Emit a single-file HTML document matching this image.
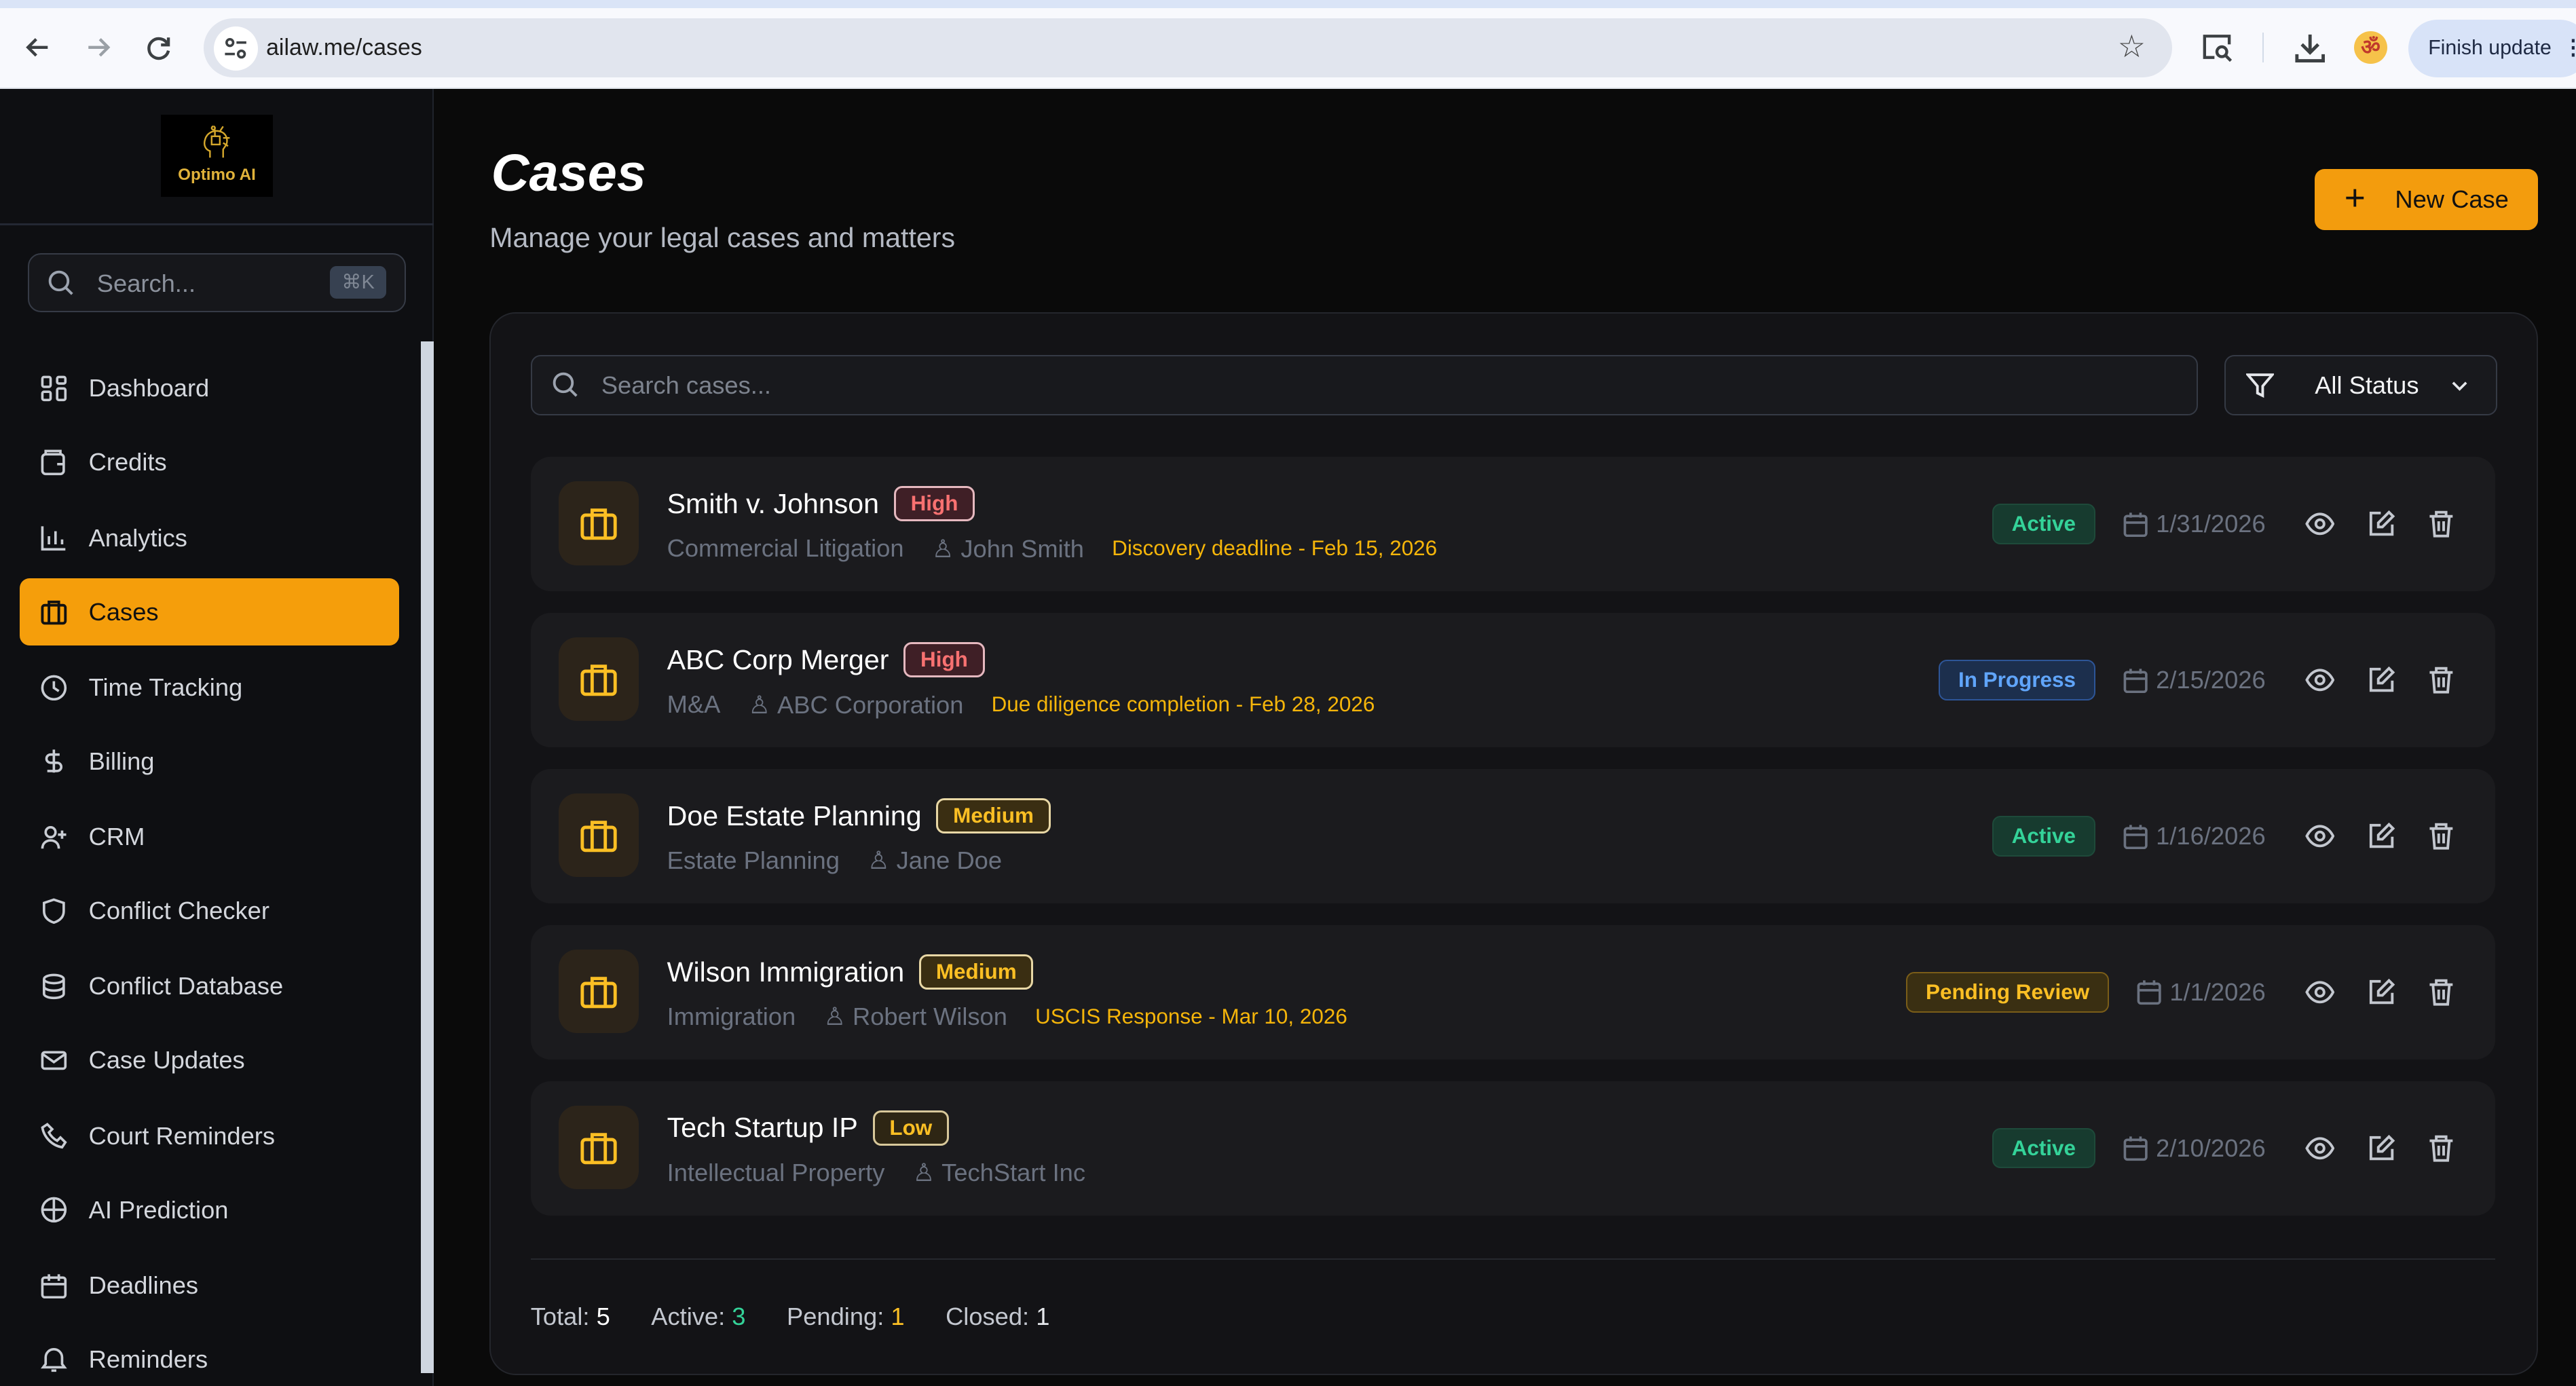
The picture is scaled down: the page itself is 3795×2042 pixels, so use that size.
<!DOCTYPE html>
<html><head><meta charset="utf-8">
<style>
*{box-sizing:border-box;margin:0;padding:0}
html,body{width:3795px;height:2042px;overflow:hidden;background:#0a0a0a}
#z{zoom:2.4203;width:1568px;height:844px;position:relative;font-family:"Liberation Sans",sans-serif;overflow:hidden}
.abs{position:absolute}
svg{display:block}
.chrome{left:0;top:0;width:1568px;height:54px;background:#f8f9fd;border-bottom:1px solid #dde1e8}
.side{left:0;top:54px;width:264px;height:790px;background:#0e0f12;border-right:1px solid #1f232b}
.nav{position:absolute;left:12px;width:231px;height:41px;display:flex;align-items:center;padding-left:13px;color:#d4d7dd;font-size:15px}
.nav svg{margin-right:13px}
.nav.act{background:#f59e0b;border-radius:6px;color:#111}
.row{position:absolute;left:323px;width:1196px;height:82px;background:#1b1b1e;border-radius:12px}
.ib{position:absolute;left:17px;top:15px;width:49px;height:51px;background:#2c241a;border-radius:11px;display:flex;align-items:center;justify-content:center}
.tt{position:absolute;left:83px;top:18px;font-size:17px;color:#fff;display:flex;align-items:center;white-space:nowrap}
.pr{margin-left:9px;font-size:13px;padding:2px 9px;border-radius:5px;border:1.5px solid;font-weight:bold}
.hi{color:#f87171;background:#3f1f26;border-color:#e5b8bf}
.me{color:#fbbf24;background:#3a2e12;border-color:#e8d7a5}
.lo{color:#fbbf24;background:#2e2614;border-color:#d8c89a}
.sub{position:absolute;left:83px;top:47px;font-size:15px;color:#6b7280;display:flex;align-items:center;white-space:nowrap}
.sub .dl{color:#f5b50a;font-size:13px;margin-left:17px}
.rt{position:absolute;right:25px;top:0;height:82px;display:flex;align-items:center;white-space:nowrap}
.st{font-size:13px;font-weight:bold;padding:4px 11px;border-radius:5px;border:1px solid}
.ac{color:#34d399;background:#173b2f;border-color:#1e4a3a}
.ip{color:#60a5fa;background:#1c2f4d;border-color:#2d5597}
.pe{color:#fbbf24;background:#3a2f12;border-color:#7a5d18}
.dt{display:flex;align-items:center;color:#6b7280;font-size:15px;margin-left:17px}
.dt svg{margin-right:5px}
.ic{margin-left:20px}
</style></head><body><div id="z">
<div class="abs" style="left:0;top:0;width:1568px;height:5px;background:#dae4f7"></div>
<div class="abs chrome" style="top:5px;height:49px"></div>
<svg class="abs" style="left:14px;top:20px" width="18" height="18" viewBox="0 0 18 18" fill="none" stroke="#3c4043" stroke-width="1.8"><path d="M15 9H3M8 4L3 9l5 5"/></svg>
<svg class="abs" style="left:51px;top:20px" width="18" height="18" viewBox="0 0 18 18" fill="none" stroke="#9aa0a6" stroke-width="1.8"><path d="M3 9h12M10 4l5 5-5 5"/></svg>
<svg class="abs" style="left:88px;top:20px" width="18" height="18" viewBox="0 0 18 18" fill="none" stroke="#3c4043" stroke-width="1.8"><path d="M14 7A6 6 0 1 0 14.5 11"/><path d="M14.5 3v4.5H10"/></svg>
<div class="abs" style="left:124px;top:11px;width:1198px;height:36px;background:#e1e5ee;border-radius:18px"></div>
<div class="abs" style="left:130px;top:16px;width:27px;height:27px;background:#fff;border-radius:50%"></div>
<svg class="abs" style="left:136px;top:22px" width="15" height="15" viewBox="0 0 15 15" fill="none" stroke="#3c4043" stroke-width="1.5"><circle cx="4" cy="4" r="2"/><path d="M8 4h6M1 11h6"/><circle cx="11" cy="11" r="2"/></svg>
<div class="abs" style="left:162px;top:21px;font-size:14px;color:#1f1f1f">ailaw.me/cases</div>
<div class="abs" style="left:1289px;top:17px;font-size:19px;color:#444">☆</div>
<svg class="abs" style="left:1340px;top:19px" width="20" height="20" viewBox="0 0 20 20" fill="none" stroke="#3c4043" stroke-width="1.8"><path d="M8 16H2V3h15v5"/><circle cx="12.5" cy="12.5" r="3"/><path d="M15 15l3 3"/></svg>
<div class="abs" style="left:1377px;top:20px;width:1px;height:18px;background:#d3dbe8"></div>
<svg class="abs" style="left:1396px;top:19px" width="20" height="20" viewBox="0 0 20 20" fill="none" stroke="#3c4043" stroke-width="2"><path d="M10 2v11M5 8l5 5 5-5M2 14v4h16v-4"/></svg>
<div class="abs" style="left:1433px;top:19px;width:20px;height:20px;border-radius:50%;background:#f6c24a;color:#c0392b;font-size:13px;text-align:center;line-height:20px;font-weight:bold">ॐ</div>
<div class="abs" style="left:1466px;top:12px;width:110px;height:35px;background:#d8e3f8;border-radius:18px;font-size:12.5px;color:#1f2a44;padding:10px 0 0 12px;white-space:nowrap">Finish update &nbsp;<b>⋮</b></div>

<div class="abs side"></div>
<div class="abs" style="left:98px;top:70px;width:68px;height:50px;background:#000;text-align:center">
<svg style="margin:4px auto 0" width="24" height="24" viewBox="0 0 24 24" fill="none" stroke="#d4a72c" stroke-width="1"><path d="M8 22v-4c-3-1-4-4-3-7 1-4 5-6 9-5 4 1 5 5 4 8l-2 3v5"/><rect x="9" y="9" width="5" height="5"/><path d="M14 6l2-3M16 10h4M16 13l3 2M11 9V5M10 3a1 1 0 1 0 .1 0"/></svg>
<div style="color:#e0b23a;font-size:10px;font-weight:bold;margin-top:3px">Optimo AI</div></div>
<div class="abs" style="left:0;top:136px;width:264px;height:1px;background:#232833"></div>
<div class="abs" style="left:17px;top:154px;width:230px;height:36px;border:1px solid #363b46;border-radius:8px;background:#16171b"></div>
<svg class="abs" style="left:29px;top:164px" width="16" height="16" viewBox="0 0 16 16" fill="none" stroke="#9ca3af" stroke-width="1.6"><circle cx="7" cy="7" r="5.5"/><path d="M11 11l4 4"/></svg>
<div class="abs" style="left:59px;top:164px;font-size:15px;color:#8b919c">Search...</div>
<div class="abs" style="left:201px;top:162px;width:34px;height:20px;background:#374151;border-radius:4px;font-size:12px;color:#7f8794;text-align:center;line-height:20px">⌘K</div>
<div class="abs" style="left:256px;top:208px;width:8px;height:628px;background:#cfd6e0"></div>

<div class="nav" style="top:216px"><svg width="16" height="16" viewBox="0 0 16 16" fill="none" stroke="#c8ccd3" stroke-width="1.5"><rect x="1" y="1" width="5" height="6" rx="1"/><rect x="10" y="1" width="5" height="4" rx="1"/><rect x="10" y="8" width="5" height="7" rx="1"/><rect x="1" y="10" width="5" height="5" rx="1"/></svg>Dashboard</div>
<div class="nav" style="top:261px"><svg width="16" height="16" viewBox="0 0 16 16" fill="none" stroke="#c8ccd3" stroke-width="1.5"><rect x="1" y="3" width="13" height="12" rx="2"/><path d="M3 3V1h9v2M10 9h4"/></svg>Credits</div>
<div class="nav" style="top:307px"><svg width="16" height="16" viewBox="0 0 16 16" fill="none" stroke="#c8ccd3" stroke-width="1.5"><path d="M1 1v14h14M5 12V7M9 12V4M13 12V9"/></svg>Analytics</div>
<div class="nav act" style="top:352px"><svg width="16" height="16" viewBox="0 0 16 16" fill="none" stroke="#111" stroke-width="1.6"><rect x="1" y="4" width="14" height="11" rx="1.5"/><path d="M5 4V2h6v2M5 4v11M11 4v11"/></svg>Cases</div>
<div class="nav" style="top:398px"><svg width="16" height="16" viewBox="0 0 16 16" fill="none" stroke="#c8ccd3" stroke-width="1.5"><circle cx="8" cy="8" r="7"/><path d="M8 4v4l3 2"/></svg>Time Tracking</div>
<div class="nav" style="top:443px"><svg width="16" height="16" viewBox="0 0 16 16" fill="none" stroke="#c8ccd3" stroke-width="1.5"><path d="M8 1v14M11.5 4H6a2.5 2.5 0 0 0 0 5h4a2.5 2.5 0 0 1 0 5H4"/></svg>Billing</div>
<div class="nav" style="top:489px"><svg width="16" height="16" viewBox="0 0 16 16" fill="none" stroke="#c8ccd3" stroke-width="1.5"><circle cx="6" cy="5" r="3"/><path d="M1 15c0-3 2-5 5-5s5 2 5 5M13 4v5M10.5 6.5h5"/></svg>CRM</div>
<div class="nav" style="top:534px"><svg width="16" height="16" viewBox="0 0 16 16" fill="none" stroke="#c8ccd3" stroke-width="1.5"><path d="M8 1l6 2v5c0 4-3 6-6 7-3-1-6-3-6-7V3z"/></svg>Conflict Checker</div>
<div class="nav" style="top:580px"><svg width="16" height="16" viewBox="0 0 16 16" fill="none" stroke="#c8ccd3" stroke-width="1.5"><ellipse cx="8" cy="3.5" rx="6" ry="2.5"/><path d="M2 3.5v9c0 1.4 2.7 2.5 6 2.5s6-1.1 6-2.5v-9M2 8c0 1.4 2.7 2.5 6 2.5s6-1.1 6-2.5"/></svg>Conflict Database</div>
<div class="nav" style="top:625px"><svg width="16" height="16" viewBox="0 0 16 16" fill="none" stroke="#c8ccd3" stroke-width="1.5"><rect x="1" y="3" width="14" height="10" rx="1.5"/><path d="M1 4l7 5 7-5"/></svg>Case Updates</div>
<div class="nav" style="top:671px"><svg width="16" height="16" viewBox="0 0 16 16" fill="none" stroke="#c8ccd3" stroke-width="1.5"><path d="M4 1l3 3-2 2c1 2 3 4 5 5l2-2 3 3-2 3C7 14 2 9 1 3z"/></svg>Court Reminders</div>
<div class="nav" style="top:716px"><svg width="16" height="16" viewBox="0 0 16 16" fill="none" stroke="#c8ccd3" stroke-width="1.5"><circle cx="8" cy="8" r="7"/><path d="M8 1v14M1 8h14"/></svg>AI Prediction</div>
<div class="nav" style="top:762px"><svg width="16" height="16" viewBox="0 0 16 16" fill="none" stroke="#c8ccd3" stroke-width="1.5"><rect x="1" y="3" width="14" height="12" rx="1.5"/><path d="M1 7h14M5 1v4M11 1v4"/></svg>Deadlines</div>
<div class="nav" style="top:807px"><svg width="16" height="16" viewBox="0 0 16 16" fill="none" stroke="#c8ccd3" stroke-width="1.5"><path d="M3 11V7a5 5 0 0 1 10 0v4l1.5 2h-13zM6.5 15h3"/></svg>Reminders</div>

<div class="abs" style="left:299px;top:87px;font-size:32px;font-weight:bold;font-style:italic;color:#fff">Cases</div>
<div class="abs" style="left:298px;top:135px;font-size:17px;color:#b5bac4">Manage your legal cases and matters</div>
<div class="abs" style="left:1409px;top:103px;width:136px;height:37px;background:#f39c0d;border-radius:6px;display:flex;align-items:center;padding-left:18px;font-size:15px;color:#111"><span style="font-size:22px;font-weight:300;margin-right:18px;margin-top:-2px">+</span>New Case</div>

<div class="abs" style="left:298px;top:190px;width:1247px;height:647px;background:#131316;border:1px solid #24262c;border-radius:16px"></div>
<div class="abs" style="left:323px;top:216px;width:1015px;height:37px;border:1px solid #353a45;border-radius:6px;background:#18191d"></div>
<svg class="abs" style="left:336px;top:226px" width="16" height="16" viewBox="0 0 16 16" fill="none" stroke="#9ca3af" stroke-width="1.6"><circle cx="7" cy="7" r="5.5"/><path d="M11 11l4 4"/></svg>
<div class="abs" style="left:366px;top:226px;font-size:15px;color:#7d838e">Search cases...</div>
<div class="abs" style="left:1354px;top:216px;width:166px;height:37px;border:1px solid #353a45;border-radius:6px;background:#18191d"></div>
<svg class="abs" style="left:1367px;top:226px" width="17" height="17" viewBox="0 0 16 16" fill="none" stroke="#e5e7eb" stroke-width="1.5"><path d="M1 2h14l-5.5 6.5V14l-3-1.5v-4z"/></svg>
<div class="abs" style="left:1409px;top:226px;font-size:15px;color:#f3f4f6">All Status</div>
<svg class="abs" style="left:1491px;top:229px" width="12" height="12" viewBox="0 0 12 12" fill="none" stroke="#e5e7eb" stroke-width="1.5"><path d="M2 4l4 4 4-4"/></svg>

<!-- rows -->
<div class="row" style="top:278px"><div class="ib"><svg width="24" height="24" viewBox="0 0 24 24" fill="none" stroke="#fbbf24" stroke-width="2"><rect x="2" y="7" width="20" height="14" rx="2"/><path d="M8 7V4h8v3M8 7v14M16 7v14"/></svg></div>
<div class="tt">Smith v. Johnson<span class="pr hi">High</span></div>
<div class="sub">Commercial Litigation<span style="margin-left:17px">♙&nbsp;John Smith</span><span class="dl">Discovery deadline - Feb 15, 2026</span></div>
<div class="rt"><span class="st ac">Active</span><span class="dt"><svg width="15" height="16" viewBox="0 0 15 16" fill="none" stroke="#6b7280" stroke-width="1.5"><rect x="1" y="3" width="13" height="12" rx="1.5"/><path d="M1 7h13M4.5 1v3M10.5 1v3"/></svg>1/31/2026</span>
<svg class="ic" style="margin-left:24px" width="18" height="18" viewBox="0 0 18 18" fill="none" stroke="#c3c7cf" stroke-width="1.6"><path d="M1 9c2-4 5-6 8-6s6 2 8 6c-2 4-5 6-8 6s-6-2-8-6z"/><circle cx="9" cy="9" r="2.5"/></svg><svg class="ic" width="17" height="17" viewBox="0 0 17 17" fill="none" stroke="#c3c7cf" stroke-width="1.6"><path d="M8 2H2v13h13V9M13 1.5l2.5 2.5L9 10.5H6.5V8z"/></svg><svg class="ic" width="16" height="17" viewBox="0 0 16 17" fill="none" stroke="#c3c7cf" stroke-width="1.6"><path d="M1 4h14M5 4V1.5h6V4M3 4l1 12h8l1-12M6.5 7v6M9.5 7v6"/></svg></div></div>

<div class="row" style="top:373px"><div class="ib"><svg width="24" height="24" viewBox="0 0 24 24" fill="none" stroke="#fbbf24" stroke-width="2"><rect x="2" y="7" width="20" height="14" rx="2"/><path d="M8 7V4h8v3M8 7v14M16 7v14"/></svg></div>
<div class="tt">ABC Corp Merger<span class="pr hi">High</span></div>
<div class="sub">M&amp;A<span style="margin-left:17px">♙&nbsp;ABC Corporation</span><span class="dl">Due diligence completion - Feb 28, 2026</span></div>
<div class="rt"><span class="st ip">In Progress</span><span class="dt"><svg width="15" height="16" viewBox="0 0 15 16" fill="none" stroke="#6b7280" stroke-width="1.5"><rect x="1" y="3" width="13" height="12" rx="1.5"/><path d="M1 7h13M4.5 1v3M10.5 1v3"/></svg>2/15/2026</span>
<svg class="ic" style="margin-left:24px" width="18" height="18" viewBox="0 0 18 18" fill="none" stroke="#c3c7cf" stroke-width="1.6"><path d="M1 9c2-4 5-6 8-6s6 2 8 6c-2 4-5 6-8 6s-6-2-8-6z"/><circle cx="9" cy="9" r="2.5"/></svg><svg class="ic" width="17" height="17" viewBox="0 0 17 17" fill="none" stroke="#c3c7cf" stroke-width="1.6"><path d="M8 2H2v13h13V9M13 1.5l2.5 2.5L9 10.5H6.5V8z"/></svg><svg class="ic" width="16" height="17" viewBox="0 0 16 17" fill="none" stroke="#c3c7cf" stroke-width="1.6"><path d="M1 4h14M5 4V1.5h6V4M3 4l1 12h8l1-12M6.5 7v6M9.5 7v6"/></svg></div></div>

<div class="row" style="top:468px"><div class="ib"><svg width="24" height="24" viewBox="0 0 24 24" fill="none" stroke="#fbbf24" stroke-width="2"><rect x="2" y="7" width="20" height="14" rx="2"/><path d="M8 7V4h8v3M8 7v14M16 7v14"/></svg></div>
<div class="tt">Doe Estate Planning<span class="pr me">Medium</span></div>
<div class="sub">Estate Planning<span style="margin-left:17px">♙&nbsp;Jane Doe</span></div>
<div class="rt"><span class="st ac">Active</span><span class="dt"><svg width="15" height="16" viewBox="0 0 15 16" fill="none" stroke="#6b7280" stroke-width="1.5"><rect x="1" y="3" width="13" height="12" rx="1.5"/><path d="M1 7h13M4.5 1v3M10.5 1v3"/></svg>1/16/2026</span>
<svg class="ic" style="margin-left:24px" width="18" height="18" viewBox="0 0 18 18" fill="none" stroke="#c3c7cf" stroke-width="1.6"><path d="M1 9c2-4 5-6 8-6s6 2 8 6c-2 4-5 6-8 6s-6-2-8-6z"/><circle cx="9" cy="9" r="2.5"/></svg><svg class="ic" width="17" height="17" viewBox="0 0 17 17" fill="none" stroke="#c3c7cf" stroke-width="1.6"><path d="M8 2H2v13h13V9M13 1.5l2.5 2.5L9 10.5H6.5V8z"/></svg><svg class="ic" width="16" height="17" viewBox="0 0 16 17" fill="none" stroke="#c3c7cf" stroke-width="1.6"><path d="M1 4h14M5 4V1.5h6V4M3 4l1 12h8l1-12M6.5 7v6M9.5 7v6"/></svg></div></div>

<div class="row" style="top:563px"><div class="ib"><svg width="24" height="24" viewBox="0 0 24 24" fill="none" stroke="#fbbf24" stroke-width="2"><rect x="2" y="7" width="20" height="14" rx="2"/><path d="M8 7V4h8v3M8 7v14M16 7v14"/></svg></div>
<div class="tt">Wilson Immigration<span class="pr me">Medium</span></div>
<div class="sub">Immigration<span style="margin-left:17px">♙&nbsp;Robert Wilson</span><span class="dl">USCIS Response - Mar 10, 2026</span></div>
<div class="rt"><span class="st pe">Pending Review</span><span class="dt"><svg width="15" height="16" viewBox="0 0 15 16" fill="none" stroke="#6b7280" stroke-width="1.5"><rect x="1" y="3" width="13" height="12" rx="1.5"/><path d="M1 7h13M4.5 1v3M10.5 1v3"/></svg>1/1/2026</span>
<svg class="ic" style="margin-left:24px" width="18" height="18" viewBox="0 0 18 18" fill="none" stroke="#c3c7cf" stroke-width="1.6"><path d="M1 9c2-4 5-6 8-6s6 2 8 6c-2 4-5 6-8 6s-6-2-8-6z"/><circle cx="9" cy="9" r="2.5"/></svg><svg class="ic" width="17" height="17" viewBox="0 0 17 17" fill="none" stroke="#c3c7cf" stroke-width="1.6"><path d="M8 2H2v13h13V9M13 1.5l2.5 2.5L9 10.5H6.5V8z"/></svg><svg class="ic" width="16" height="17" viewBox="0 0 16 17" fill="none" stroke="#c3c7cf" stroke-width="1.6"><path d="M1 4h14M5 4V1.5h6V4M3 4l1 12h8l1-12M6.5 7v6M9.5 7v6"/></svg></div></div>

<div class="row" style="top:658px"><div class="ib"><svg width="24" height="24" viewBox="0 0 24 24" fill="none" stroke="#fbbf24" stroke-width="2"><rect x="2" y="7" width="20" height="14" rx="2"/><path d="M8 7V4h8v3M8 7v14M16 7v14"/></svg></div>
<div class="tt">Tech Startup IP<span class="pr lo">Low</span></div>
<div class="sub">Intellectual Property<span style="margin-left:17px">♙&nbsp;TechStart Inc</span></div>
<div class="rt"><span class="st ac">Active</span><span class="dt"><svg width="15" height="16" viewBox="0 0 15 16" fill="none" stroke="#6b7280" stroke-width="1.5"><rect x="1" y="3" width="13" height="12" rx="1.5"/><path d="M1 7h13M4.5 1v3M10.5 1v3"/></svg>2/10/2026</span>
<svg class="ic" style="margin-left:24px" width="18" height="18" viewBox="0 0 18 18" fill="none" stroke="#c3c7cf" stroke-width="1.6"><path d="M1 9c2-4 5-6 8-6s6 2 8 6c-2 4-5 6-8 6s-6-2-8-6z"/><circle cx="9" cy="9" r="2.5"/></svg><svg class="ic" width="17" height="17" viewBox="0 0 17 17" fill="none" stroke="#c3c7cf" stroke-width="1.6"><path d="M8 2H2v13h13V9M13 1.5l2.5 2.5L9 10.5H6.5V8z"/></svg><svg class="ic" width="16" height="17" viewBox="0 0 16 17" fill="none" stroke="#c3c7cf" stroke-width="1.6"><path d="M1 4h14M5 4V1.5h6V4M3 4l1 12h8l1-12M6.5 7v6M9.5 7v6"/></svg></div></div>

<div class="abs" style="left:323px;top:766px;width:1196px;height:1px;background:#26282e"></div>
<div class="abs" style="left:323px;top:793px;font-size:15px;color:#c3c7cf;white-space:nowrap">Total: <b style="color:#fff;font-weight:normal">5</b><span style="margin-left:25px">Active: <span style="color:#34d399">3</span></span><span style="margin-left:25px">Pending: <span style="color:#fbbf24">1</span></span><span style="margin-left:25px">Closed: <span style="color:#e5e7eb">1</span></span></div>
</div></body></html>
